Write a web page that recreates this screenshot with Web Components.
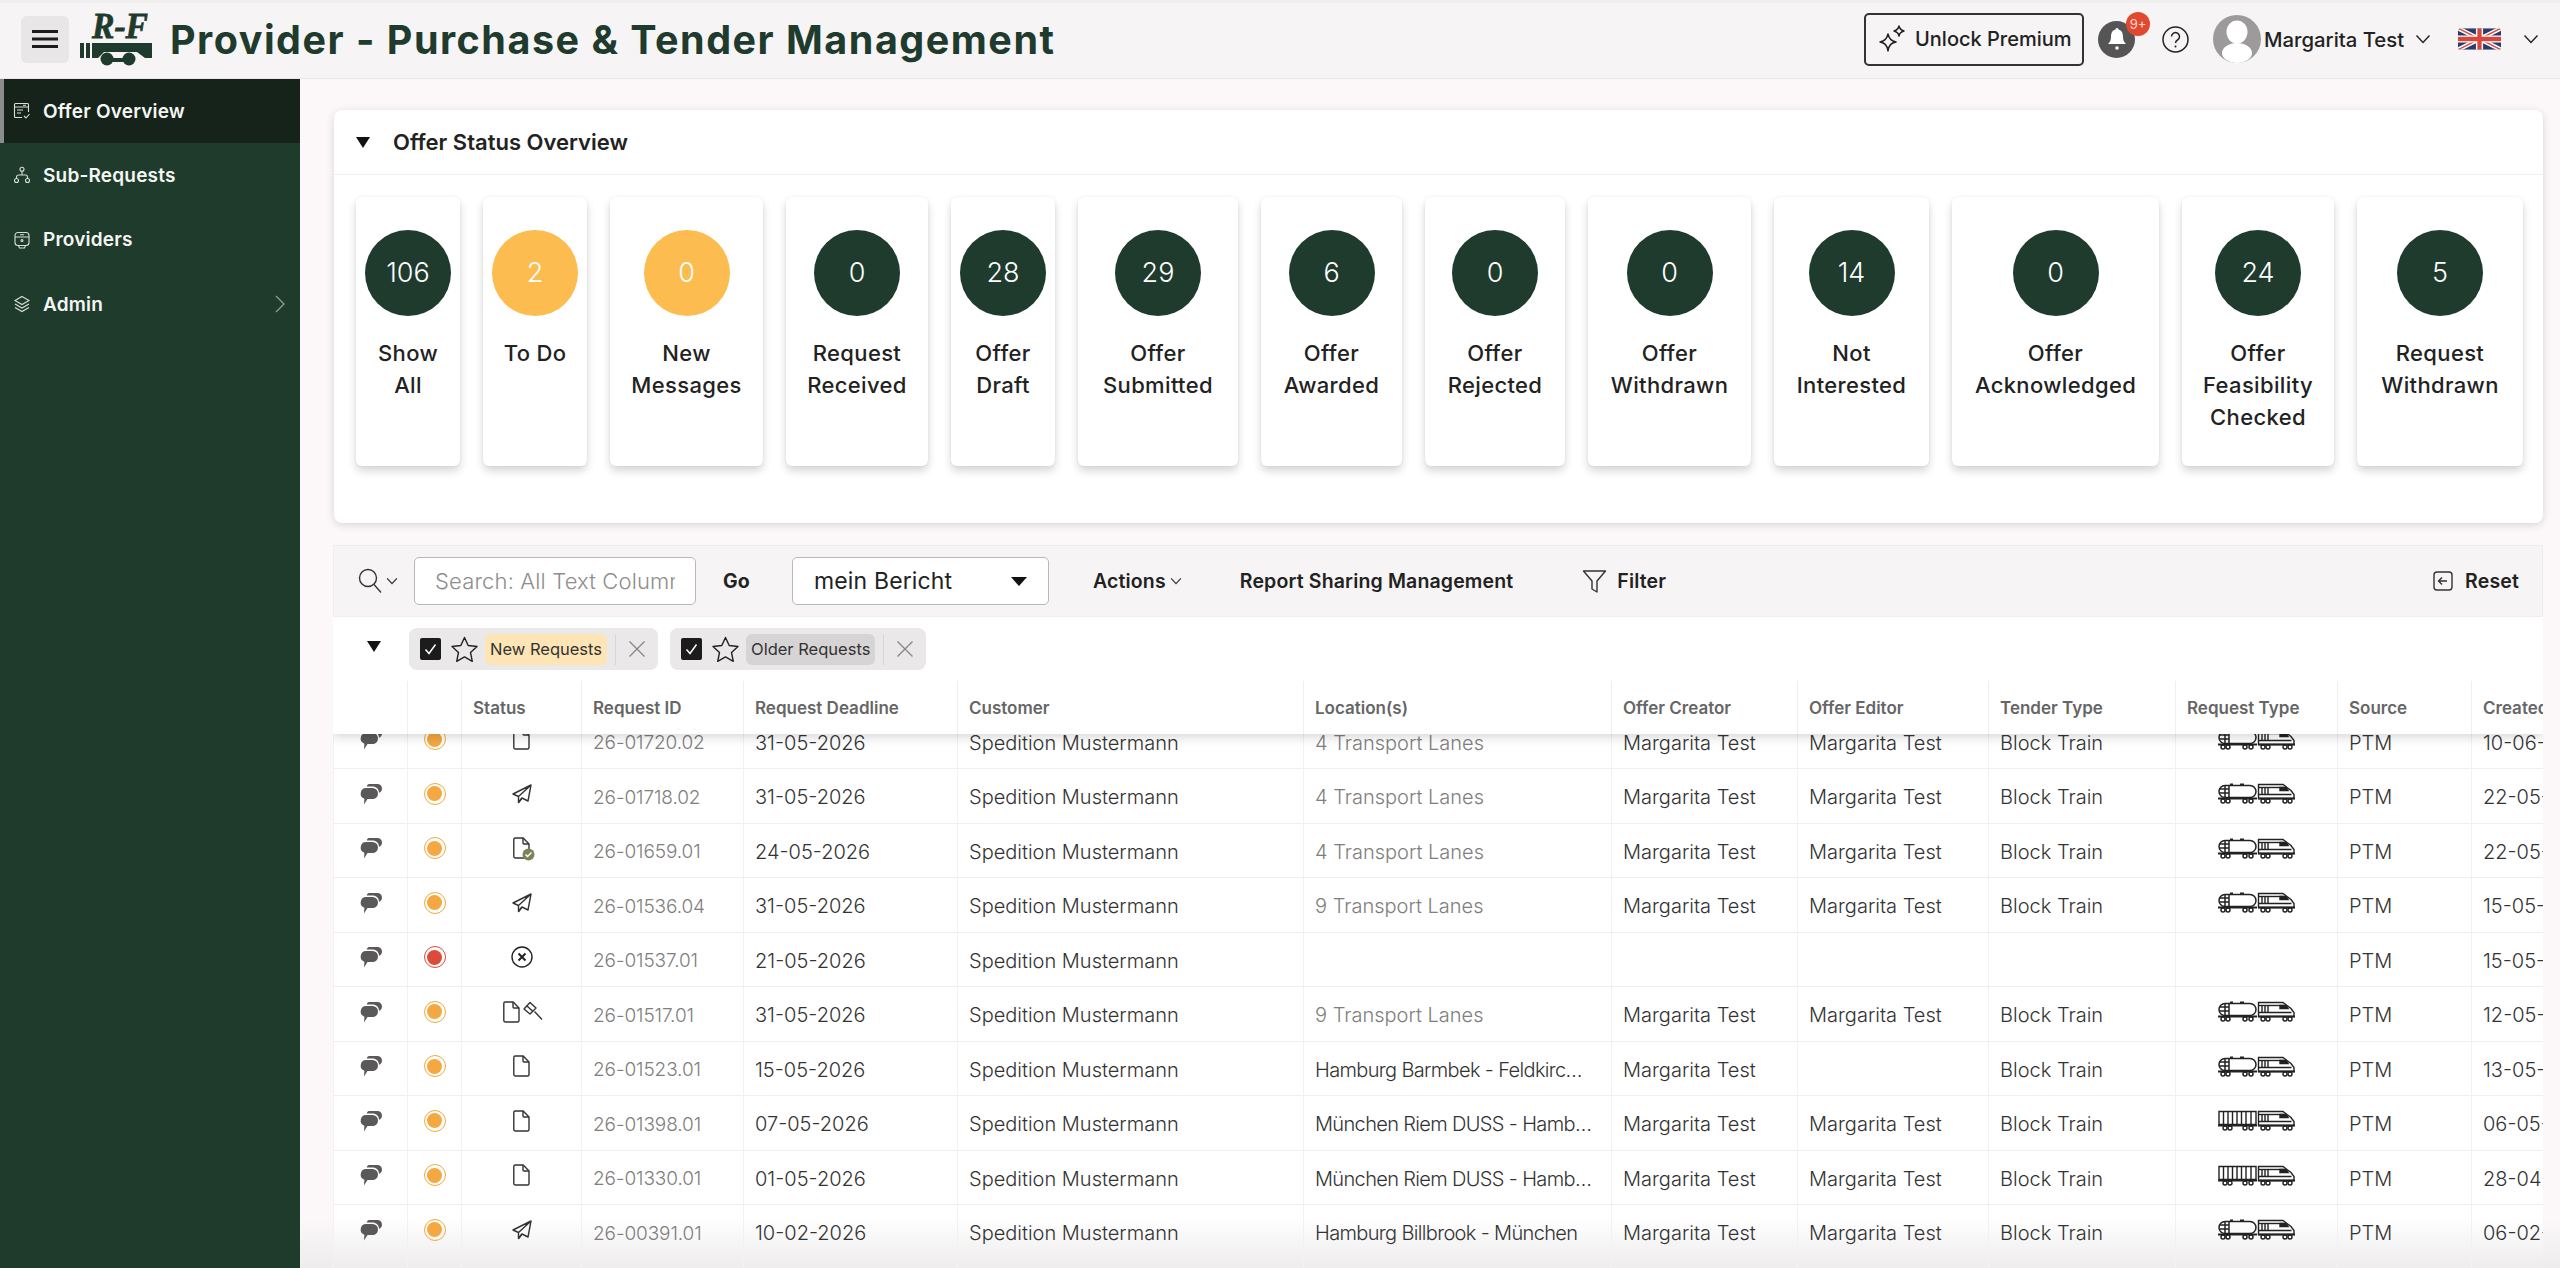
<!DOCTYPE html>
<html lang="en">
<head>
<meta charset="utf-8">
<title>Provider - Purchase &amp; Tender Management</title>
<style>
  html, body { margin: 0; padding: 0; height: 100%; overflow: hidden; background: #fcf8f9; }
  body { font-family: Inter, "Liberation Sans", sans-serif; }
</style>
</head>
<body>
<rf-app>
  <rf-header slot="header"></rf-header>
  <rf-sidebar slot="sidebar">
    <rf-nav-item icon="overview" active>Offer Overview</rf-nav-item>
    <rf-nav-item icon="tree">Sub-Requests</rf-nav-item>
    <rf-nav-item icon="train">Providers</rf-nav-item>
    <rf-nav-item icon="layers" arrow>Admin</rf-nav-item>
  </rf-sidebar>
  <rf-status-card>
    <rf-tile value="106" size="104">Show<br>All</rf-tile>
    <rf-tile value="2" size="104" warn>To Do</rf-tile>
    <rf-tile value="0" size="153" warn>New<br>Messages</rf-tile>
    <rf-tile value="0" size="142">Request<br>Received</rf-tile>
    <rf-tile value="28" size="104">Offer<br>Draft</rf-tile>
    <rf-tile value="29" size="160">Offer<br>Submitted</rf-tile>
    <rf-tile value="6" size="141">Offer<br>Awarded</rf-tile>
    <rf-tile value="0" size="140">Offer<br>Rejected</rf-tile>
    <rf-tile value="0" size="163">Offer<br>Withdrawn</rf-tile>
    <rf-tile value="14" size="155">Not<br>Interested</rf-tile>
    <rf-tile value="0" size="207">Offer<br>Acknowledged</rf-tile>
    <rf-tile value="24" size="152">Offer<br>Feasibility<br>Checked</rf-tile>
    <rf-tile value="5" size="166">Request<br>Withdrawn</rf-tile>
  </rf-status-card>
  <rf-toolbar></rf-toolbar>
  <rf-chip-row>
    <rf-chip tone="new">New Requests</rf-chip>
    <rf-chip tone="old">Older Requests</rf-chip>
  </rf-chip-row>
  <rf-table></rf-table>
</rf-app>

<script>
const ICONS = {
  overview: `<svg viewBox="0 0 18 18" width="18" height="18" fill="none" stroke="currentColor" stroke-width="1.1"><path d="M9 15.5H2.5a1 1 0 0 1-1-1v-12a1 1 0 0 1 1-1h12a1 1 0 0 1 1 1V10"/><path d="M1.5 5h14M4 8h6M4 11h4M10 3.2h3"/><path d="M11 14l2 2 3.5-4"/></svg>`,
  tree: `<svg viewBox="0 0 18 18" width="18" height="18" fill="none" stroke="currentColor" stroke-width="1.1"><circle cx="9" cy="3.2" r="2"/><circle cx="3.5" cy="14.5" r="2"/><circle cx="14.5" cy="14.5" r="2"/><path d="M9 5.2V9M3.5 12.5V11a2 2 0 0 1 2-2h7a2 2 0 0 1 2 2v1.5"/></svg>`,
  train: `<svg viewBox="0 0 18 18" width="18" height="18" fill="none" stroke="currentColor" stroke-width="1.1"><path d="M5 1.5h8a3 3 0 0 1 3 3v7a3 3 0 0 1-3 3H5a3 3 0 0 1-3-3v-7a3 3 0 0 1 3-3z"/><path d="M2 6h14M7 3.8h4"/><circle cx="9" cy="9.5" r="1"/><path d="M5.5 14.5L6.5 17h5l1-2.5"/></svg>`,
  layers: `<svg viewBox="0 0 18 18" width="18" height="18" fill="none" stroke="currentColor" stroke-width="1.1"><path d="M9 1.5l7 4-7 4-7-4z"/><path d="M2 9l7 4 7-4M2 12.5l7 4 7-4"/></svg>`,
  chevron: `<svg viewBox="0 0 16 10" width="16" height="10" fill="none" stroke="currentColor" stroke-width="1.4"><path d="M1.5 1.5L8 8.5l6.5-7"/></svg>`,
  chat: `<svg viewBox="0 0 22 22" width="22" height="22" fill="#5a5858"><path d="M9 1h8.5A4.5 4.5 0 0 1 22 5.5c0 2-1.2 3.7-3 4.3.1-3.9-3-6.3-6.5-6.3H6.7C7 2 8 1 9 1z"/><path d="M6 5h6.5a5.5 5.5 0 0 1 0 11H7.5L4 21.5l.4-5.8A5.5 5.5 0 0 1 6 5z"/></svg>`,
  doc: `<svg viewBox="0 0 17 22" width="17" height="22" fill="none" stroke="#333" stroke-width="1.4" stroke-linejoin="round"><path d="M2.2 1h8L16 7v12.5A1.5 1.5 0 0 1 14.500 21H2.200A1.500 1.500 0 0 1 .8 19.500v-17A1.500 1.500 0 0 1 2.200 1z"/><path d="M10 1v5a1 1 0 0 0 1 1h5"/></svg>`,
  plane: `<svg viewBox="0 0 20 20" width="20" height="20" fill="none" stroke="#333" stroke-width="1.4" stroke-linejoin="round"><path d="M19 1L1 10l5.5 2.5L19 1l-3 16-6-3-3.5 4.5v-6"/><path d="M6.5 18.5L10 14"/></svg>`,
  cross: `<svg viewBox="0 0 22 22" width="22" height="22" fill="none" stroke="#222" stroke-width="1.4"><circle cx="11" cy="11" r="10"/><path d="M7.5 7.5l7 7M14.5 7.5l-7 7" stroke-width="2"/></svg>`,
  gavel: `<svg viewBox="0 0 20 20" width="20" height="20" fill="none" stroke="#333" stroke-width="1.4" stroke-linejoin="round"><path d="M1 8l6-6.5L13 7l-6 6z"/><path d="M4 5l6 5.5"/><path d="M11.5 10.5l7.5 8"/></svg>`,
  tank: `<g fill="none" stroke="#222" stroke-width="1.5"><path d="M7 2.5h25a6 6 0 0 1 0 12H7a6 6 0 0 1 0-12z"/><path d="M7 2.5v12M11 2.5v12M1.5 6h9M1.5 10h9"/><path d="M12 1.2h3M22 1.2h4"/><path d="M0 15.5h39" stroke-width="1.8"/><circle cx="5" cy="18" r="2"/><circle cx="10" cy="18" r="2"/><circle cx="27" cy="18" r="2"/><circle cx="33" cy="18" r="2"/></g>`,
  wagons: `<g fill="none" stroke="#222" stroke-width="1.4"><path d="M1 1.5h37v13H1z"/><path d="M5.5 1.5v13M10 1.5v13M14.5 1.5v13M19 1.5v13M23.5 1.5v13M28 1.5v13M33 1.5v13"/><path d="M0 15.5h39" stroke-width="1.8"/><circle cx="7" cy="18" r="2"/><circle cx="12" cy="18" r="2"/><circle cx="27" cy="18" r="2"/><circle cx="33" cy="18" r="2"/></g>`,
  loco: `<g fill="none" stroke="#222" stroke-width="1.4" transform="translate(39 0)"><path d="M1.5 1.5H26l8 6 3 4v4H1.5z"/><path d="M1.5 4.5h26"/><path d="M5 5v6M8 5v6M11 5v6"/><path d="M23 4.5h6l2 3h-8z" fill="#222"/><path d="M1.5 11.5h33"/><path d="M1 15.5h37" stroke-width="1.8"/><circle cx="6" cy="18" r="2"/><circle cx="11" cy="18" r="2"/><circle cx="28" cy="18" r="2"/><circle cx="33" cy="18" r="2"/></g>`,
};

function trainIcon(kind) {
  return `<svg viewBox="0 0 78 21" width="78" height="21">${ICONS[kind]}${ICONS.loco}</svg>`;
}

const appTemplate = document.createElement("template");
appTemplate.innerHTML = `
  <style>
    :host {
      display: grid;
      grid-template-columns: 300px 1fr;
      grid-template-rows: 79px 1fr;
      height: 1268px;
      overflow: hidden;
      background: #fcf8f9;
    }
    .top { grid-column: 1 / 3; }
    main {
      display: flex;
      flex-direction: column;
      min-width: 0;
      min-height: 0;
      padding: 31px 17px 0 33px;
      background: linear-gradient(to bottom, #fcf8f9 calc(100% - 50px), #eeecec);
    }
  </style>
  <div class="top"><slot name="header"></slot></div>
  <slot name="sidebar"></slot>
  <main><slot></slot></main>
`;

class App extends HTMLElement {
  constructor() {
    super();
    this.attachShadow({ mode: "open" }).appendChild(appTemplate.content.cloneNode(true));
  }
}

const headerTemplate = document.createElement("template");
headerTemplate.innerHTML = `
  <style>
    :host {
      display: flex;
      align-items: center;
      height: 79px;
      box-sizing: border-box;
      padding: 0 21px 0 21px;
      background: linear-gradient(#f0eff0 0, #f0eff0 3px, #f6f4f5 3px);
      border-bottom: 1px solid #e9e6e5;
      color: #222;
    }
    .burger {
      width: 48px;
      height: 47px;
      border-radius: 6px;
      background: #e8e6e7;
      display: flex;
      align-items: center;
      justify-content: center;
      flex: none;
    }
    .logo { margin-left: 10px; flex: none; overflow: visible; }
    h1 {
      margin: 2px 0 0 18px;
      font-size: 39.5px;
      font-weight: 700;
      color: #1e3b2d;
      letter-spacing: 1.5px;
      white-space: nowrap;
    }
    .right { margin-left: auto; display: flex; align-items: center; }
    .premium {
      display: flex;
      align-items: center;
      gap: 9px;
      box-sizing: border-box;
      width: 220px;
      height: 53px;
      padding-left: 12px;
      border: 2px solid #333;
      border-radius: 5px;
      font-size: 20px;
      font-weight: 500;
      color: #222;
    }
    .bell {
      position: relative;
      width: 37px;
      height: 37px;
      margin-left: 14px;
      border-radius: 50%;
      background: #555;
      display: flex;
      align-items: center;
      justify-content: center;
    }
    .badge {
      position: absolute;
      top: -9px;
      right: -15px;
      width: 24px;
      height: 24px;
      border-radius: 50%;
      background: #e0492f;
      color: #ffd9cf;
      font-size: 13px;
      line-height: 24px;
      text-align: center;
    }
    .help { margin-left: 27px; display: flex; }
    .avatar { margin-left: 24px; display: flex; }
    .name { margin-left: 3px; font-size: 20.3px; font-weight: 500; white-space: nowrap; width: 139px; }
    .chev { display: flex; color: #222; margin-left: 12px; }
    .flag { margin-left: 27px; display: flex; }
    .chev.last { margin-left: 22px; }
  </style>
  <div class="burger">
    <svg width="26" height="18" viewBox="0 0 26 18" fill="#1c1c1c"><rect y="0" width="26" height="3"/><rect y="7.5" width="26" height="3"/><rect y="15" width="26" height="3"/></svg>
  </div>
  <svg class="logo" width="73" height="54" viewBox="0 0 73 54">
    <text x="13" y="26" font-family="Liberation Serif, serif" font-size="36" font-weight="700" font-style="italic" fill="#1e3b2d" stroke="#1e3b2d" stroke-width="0.8" textLength="56" lengthAdjust="spacingAndGlyphs">R-F</text>
    <path d="M1 31h4v15H1zM7 31h4v15H7z" fill="#1e3b2d"/>
    <path d="M13 31h60v15h-7l-8-6H25l-6 6h-6z" fill="#1e3b2d"/>
    <path d="M28 46h20v4H28z" fill="#1e3b2d"/>
    <circle cx="28" cy="47" r="6.5" fill="#1e3b2d"/><circle cx="50" cy="47" r="6.5" fill="#1e3b2d"/>
  </svg>
  <h1>Provider - Purchase &amp; Tender Management</h1>
  <div class="right">
    <div class="premium">
      <svg width="28" height="28" viewBox="0 0 28 28" fill="none" stroke="#222" stroke-width="1.5" stroke-linejoin="round"><path d="M10 9c1 5 3 7 8 8-5 1-7 3-8 9-1-6-3-8-8-9 5-1 7-3 8-8z"/><path d="M21 1c.6 3 1.8 4.2 5 5-3.2.8-4.4 2-5 5-.6-3-1.8-4.2-5-5 3.2-.8 4.4-2 5-5z"/></svg>
      <span>Unlock Premium</span>
    </div>
    <div class="bell">
      <svg width="18" height="24" viewBox="0 0 18 24" fill="#fff"><path d="M9 1c1 0 1.5.8 1.5 1.6C14 3.5 15 6.5 15 10c0 3 1 5 3 7H0c2-2 3-4 3-7 0-3.5 1-6.5 4.500-7.400C7.500 1.800 8 1 9 1z"/><circle cx="9" cy="21" r="1.8"/></svg>
      <span class="badge">9+</span>
    </div>
    <div class="help">
      <svg width="27" height="27" viewBox="0 0 27 27" fill="none" stroke="#222" stroke-width="1.5"><circle cx="13.5" cy="13.5" r="12.5"/><path d="M9.5 10.5a4 4 0 1 1 6 3.5c-1.3.8-2 1.5-2 3"/><circle cx="13.5" cy="20.5" r="1" fill="#222" stroke="none"/></svg>
    </div>
    <div class="avatar">
      <svg width="48" height="48" viewBox="0 0 48 48"><circle cx="24" cy="24" r="24" fill="#9c9a9b"/><ellipse cx="24" cy="17" rx="10.5" ry="11.5" fill="#fff"/><ellipse cx="24" cy="38" rx="15" ry="10" fill="#fff"/></svg>
    </div>
    <span class="name">Margarita Test</span>
    <span class="chev">${ICONS.chevron}</span>
    <div class="flag">
      <svg width="43" height="22" viewBox="0 0 60 30"><defs><clipPath id="f"><rect width="60" height="30" rx="4"/></clipPath></defs><g clip-path="url(#f)"><rect width="60" height="30" fill="#2b3a6b"/><path d="M0 0l60 30M60 0L0 30" stroke="#fff" stroke-width="6"/><path d="M0 0l60 30M60 0L0 30" stroke="#d9473c" stroke-width="2"/><path d="M30 0v30M0 15h60" stroke="#fff" stroke-width="10"/><path d="M30 0v30M0 15h60" stroke="#d9473c" stroke-width="6"/></g></svg>
    </div>
    <span class="chev last">${ICONS.chevron}</span>
  </div>
`;

class Header extends HTMLElement {
  constructor() {
    super();
    this.attachShadow({ mode: "open" }).appendChild(headerTemplate.content.cloneNode(true));
  }
}

const sidebarTemplate = document.createElement("template");
sidebarTemplate.innerHTML = `
  <style>
    :host { display: block; background: #1f3b2c; min-height: 0; }
  </style>
  <slot></slot>
`;

class Sidebar extends HTMLElement {
  constructor() {
    super();
    this.attachShadow({ mode: "open" }).appendChild(sidebarTemplate.content.cloneNode(true));
  }
}

const navItemTemplate = document.createElement("template");
navItemTemplate.innerHTML = `
  <style>
    :host {
      display: flex;
      align-items: center;
      height: 64.3px;
      padding-left: 13px;
      padding-right: 15px;
      color: #f4f6f4;
      font-size: 19px;
      font-weight: 600;
      letter-spacing: 0.2px;
      box-sizing: border-box;
    }
    :host([active]) {
      background: #16231b;
      box-shadow: inset 4px 0 0 #8a8d8b;
    }
    .icon { display: flex; width: 18px; margin-right: 12px; color: #d9dedb; }
    .arrow { margin-left: auto; display: flex; color: #8d9a92; }
  </style>
  <span class="icon"></span>
  <slot></slot>
  <span class="arrow"></span>
`;

class NavItem extends HTMLElement {
  constructor() {
    super();
    this.attachShadow({ mode: "open" }).appendChild(navItemTemplate.content.cloneNode(true));
  }

  connectedCallback() {
    this.shadowRoot.querySelector(".icon").innerHTML = ICONS[this.getAttribute("icon")];
    if (this.hasAttribute("arrow")) {
      this.shadowRoot.querySelector(".arrow").innerHTML =
        `<svg width="10" height="18" viewBox="0 0 10 18" fill="none" stroke="currentColor" stroke-width="1.4"><path d="M1 1l8 8-8 8"/></svg>`;
    }
  }
}

const statusCardTemplate = document.createElement("template");
statusCardTemplate.innerHTML = `
  <style>
    :host {
      display: block;
      height: 413px;
      flex: none;
      margin-left: 1px;
      box-sizing: border-box;
      background: #fff;
      border-radius: 8px;
      box-shadow: 0 2px 8px rgba(0, 0, 0, 0.14);
    }
    .head {
      display: flex;
      align-items: center;
      height: 65px;
      box-sizing: border-box;
      padding-left: 22px;
      border-bottom: 1px solid #f1eeee;
      font-size: 22px;
      font-weight: 600;
      color: #222;
    }
    .caret {
      width: 0;
      height: 0;
      border-left: 7px solid transparent;
      border-right: 7px solid transparent;
      border-top: 11px solid #111;
      margin-right: 23px;
    }
    .tiles { display: flex; gap: 23px; padding: 22px 0 0 22px; }
  </style>
  <div class="head"><span class="caret"></span>Offer Status Overview</div>
  <div class="tiles"><slot></slot></div>
`;

class StatusCard extends HTMLElement {
  constructor() {
    super();
    this.attachShadow({ mode: "open" }).appendChild(statusCardTemplate.content.cloneNode(true));
  }
}

const tileTemplate = document.createElement("template");
tileTemplate.innerHTML = `
  <style>
    :host {
      display: flex;
      flex-direction: column;
      align-items: center;
      flex: none;
      height: 269px;
      box-sizing: border-box;
      padding-top: 33px;
      background: #fff;
      border-radius: 6px;
      box-shadow: 0 5px 8px rgba(0, 0, 0, 0.16), 0 0 3px rgba(0, 0, 0, 0.06);
      font-size: 22px;
      font-weight: 500;
      letter-spacing: 0.35px;
      line-height: 32px;
      text-align: center;
      color: #222;
    }
    .num {
      width: 86px;
      height: 86px;
      border-radius: 50%;
      background: #1e3b2d;
      color: #fff;
      font-size: 27px;
      font-weight: 300;
      letter-spacing: 0;
      line-height: 86px;
      margin-bottom: 21px;
    }
    :host([warn]) .num { background: #fdbc4f; }
  </style>
  <div class="num"></div>
  <div><slot></slot></div>
`;

class Tile extends HTMLElement {
  constructor() {
    super();
    this.attachShadow({ mode: "open" }).appendChild(tileTemplate.content.cloneNode(true));
  }

  connectedCallback() {
    this.style.width = this.getAttribute("size") + "px";
    this.shadowRoot.querySelector(".num").textContent = this.getAttribute("value");
  }
}

const toolbarTemplate = document.createElement("template");
toolbarTemplate.innerHTML = `
  <style>
    :host {
      display: flex;
      align-items: center;
      flex: none;
      height: 72px;
      margin-top: 22px;
      box-sizing: border-box;
      padding: 0 23px;
      background: #f6f4f5;
      border: 1px solid #efeded;
      font-size: 19.5px;
      letter-spacing: 0.15px;
      font-weight: 600;
      color: #222;
    }
    .search { display: flex; align-items: center; gap: 3px; color: #333; }
    .input {
      box-sizing: border-box;
      width: 282px;
      height: 48px;
      margin-left: 16px;
      padding: 0 20px;
      line-height: 46px;
      background: #fff;
      border: 1px solid #b9b7b7;
      border-radius: 5px;
      font-size: 22px;
      font-weight: 300;
      color: #8f8d8d;
    }
    .input span { display: block; overflow: hidden; white-space: nowrap; }
    .go { margin-left: 27px; font-weight: 700; width: 69px; }
    .select {
      display: flex;
      align-items: center;
      box-sizing: border-box;
      width: 257px;
      height: 48px;
      padding: 0 21px;
      background: #fff;
      border: 1px solid #b9b7b7;
      border-radius: 5px;
      font-size: 23px;
      font-weight: 400;
    }
    .select i {
      margin-left: auto;
      border-left: 8px solid transparent;
      border-right: 8px solid transparent;
      border-top: 9px solid #111;
    }
    .actions { margin-left: 44px; display: flex; align-items: center; gap: 4px; }
    .report { margin-left: 58px; }
    .filter { margin-left: 69px; display: flex; align-items: center; gap: 10px; }
    .reset { margin-left: auto; display: flex; align-items: center; gap: 12px; }
  </style>
  <div class="search">
    <svg width="26" height="26" viewBox="0 0 26 26" fill="none" stroke="#333" stroke-width="1.4"><circle cx="11" cy="10" r="8.5"/><path d="M17 16.5l7 8"/></svg>
    <svg width="12" height="8" viewBox="0 0 16 10" fill="none" stroke="#333" stroke-width="1.8"><path d="M1.5 1.5L8 8.5l6.5-7"/></svg>
  </div>
  <div class="input"><span>Search: All Text Columns</span></div>
  <span class="go">Go</span>
  <div class="select">mein Bericht<i></i></div>
  <div class="actions">Actions <svg width="12" height="8" viewBox="0 0 16 10" fill="none" stroke="#333" stroke-width="1.5"><path d="M1.5 1.5L8 8.5l6.5-7"/></svg></div>
  <span class="report">Report Sharing Management</span>
  <div class="filter">
    <svg width="25" height="25" viewBox="0 0 25 25" fill="none" stroke="#333" stroke-width="1.4" stroke-linejoin="round"><path d="M1.5 2h22L15 12v11l-5-3v-8z"/></svg>
    Filter
  </div>
  <div class="reset">
    <svg width="20" height="20" viewBox="0 0 20 20" fill="none" stroke="#333" stroke-width="1.4"><rect x="1" y="1" width="18" height="18" rx="3"/><path d="M14 10H6M9 6.5L5.5 10 9 13.5"/></svg>
    Reset
  </div>
`;

class Toolbar extends HTMLElement {
  constructor() {
    super();
    this.attachShadow({ mode: "open" }).appendChild(toolbarTemplate.content.cloneNode(true));
  }
}

const chipRowTemplate = document.createElement("template");
chipRowTemplate.innerHTML = `
  <style>
    :host {
      display: flex;
      align-items: center;
      flex: none;
      height: 64px;
      padding-left: 34px;
      background: #fff;
    }
    .caret {
      width: 0;
      height: 0;
      border-left: 7px solid transparent;
      border-right: 7px solid transparent;
      border-top: 11px solid #111;
      margin: -6px 28px 0 0;
    }
    .chips { display: flex; gap: 12px; }
  </style>
  <span class="caret"></span>
  <div class="chips"><slot></slot></div>
`;

class ChipRow extends HTMLElement {
  constructor() {
    super();
    this.attachShadow({ mode: "open" }).appendChild(chipRowTemplate.content.cloneNode(true));
  }
}

const chipTemplate = document.createElement("template");
chipTemplate.innerHTML = `
  <style>
    :host {
      display: flex;
      align-items: center;
      height: 42px;
      padding: 0 12px 0 11px;
      background: #ebe8e9;
      border-radius: 8px;
      font-size: 16.5px;
      color: #333;
    }
    .check {
      width: 21px;
      height: 22px;
      border-radius: 2px;
      background: #1c1c1c;
      display: flex;
      align-items: center;
      justify-content: center;
    }
    .star { margin: 0 7px 0 10px; display: flex; }
    .label {
      height: 31px;
      line-height: 31px;
      padding: 0 5px;
      border-radius: 6px;
      white-space: nowrap;
    }
    :host([tone="new"]) .label { background: #fde5b5; }
    :host([tone="old"]) .label { background: #d6d4d4; }
    .x {
      display: flex;
      align-items: center;
      height: 31px;
      margin-left: 8px;
      padding-left: 12px;
      border-left: 1px solid #d9d6d7;
    }
  </style>
  <span class="check"><svg width="13" height="12" viewBox="0 0 13 12" fill="none" stroke="#fff" stroke-width="1.5"><path d="M1.5 6.5l3.5 4 6.5-9"/></svg></span>
  <span class="star"><svg width="27" height="27" viewBox="0 0 27 27" fill="none" stroke="#222" stroke-width="1.4" stroke-linejoin="round"><path d="M13.5 1.5l3.7 8 8.8 1-6.500 6 1.800 8.800-7.800-4.400-7.800 4.400 1.800-8.800-6.500-6 8.800-1z"/></svg></span>
  <span class="label"><slot></slot></span>
  <span class="x"><svg width="18" height="18" viewBox="0 0 18 18" fill="none" stroke="#888" stroke-width="1.4"><path d="M1.5 1.5l15 15M16.5 1.5l-15 15"/></svg></span>
`;

class Chip extends HTMLElement {
  constructor() {
    super();
    this.attachShadow({ mode: "open" }).appendChild(chipTemplate.content.cloneNode(true));
  }
}

const COLUMNS = "74px 54px 120px 162px 214px 346px 308px 186px 191px 187px 162px 134px 72px";
const T4 = "4 Transport Lanes";
const T9 = "9 Transport Lanes";
const MT = "Margarita Test";
const BT = "Block Train";
const ROWS = [
  ["doc", "o", "26-01720.02", "31-05-2026", T4, MT, MT, BT, "tank", "10-06-2026", true],
  ["plane", "o", "26-01718.02", "31-05-2026", T4, MT, MT, BT, "tank", "22-05-2026", true],
  ["docok", "o", "26-01659.01", "24-05-2026", T4, MT, MT, BT, "tank", "22-05-2026", true],
  ["plane", "o", "26-01536.04", "31-05-2026", T9, MT, MT, BT, "tank", "15-05-2026", true],
  ["cross", "r", "26-01537.01", "21-05-2026", "", "", "", "", "", "15-05-2026", false],
  ["docgavel", "o", "26-01517.01", "31-05-2026", T9, MT, MT, BT, "tank", "12-05-2026", true],
  ["doc", "o", "26-01523.01", "15-05-2026", "Hamburg Barmbek - Feldkirchen", MT, "", BT, "tank", "13-05-2026", false],
  ["doc", "o", "26-01398.01", "07-05-2026", "München Riem DUSS - Hamburg", MT, MT, BT, "wagons", "06-05-2026", false],
  ["doc", "o", "26-01330.01", "01-05-2026", "München Riem DUSS - Hamburg", MT, MT, BT, "wagons", "28-04-2026", false],
  ["plane", "o", "26-00391.01", "10-02-2026", "Hamburg Billbrook - München", MT, MT, BT, "tank", "06-02-2026", false],
];

function statusIcon(name) {
  if (name === "docok") {
    return `<span class="pair">${ICONS.doc}<svg class="ok" width="13" height="13" viewBox="0 0 13 13"><circle cx="6.5" cy="6.5" r="6" fill="#7d8257"/><path d="M3.5 6.5l2 2 4-4" fill="none" stroke="#fff" stroke-width="1.5"/></svg></span>`;
  }
  if (name === "docgavel") {
    return `<span class="pair wide">${ICONS.doc}${ICONS.gavel}</span>`;
  }
  return ICONS[name];
}

const rowTemplate = document.createElement("template");
rowTemplate.innerHTML = `
  <style>
    :host {
      display: grid;
      grid-template-columns: ${COLUMNS};
      height: 54.5px;
      box-sizing: border-box;
      border-bottom: 1px solid #f1eeef;
      font-size: 20px;
      font-weight: 300;
      color: #333;
    }
    div {
      display: flex;
      align-items: center;
      min-width: 0;
      padding: 3px 0 0 11px;
      border-left: 1px solid #f3f1f1;
      white-space: nowrap;
      overflow: hidden;
    }
    div:first-child { border-left: 0; }
    .txt { overflow: hidden; text-overflow: ellipsis; max-width: 278px; }
    .long { letter-spacing: -0.65px; }
    .grey { color: #807e7e; }
    .id { font-size: 19px; letter-spacing: -0.1px; }
    .icon { justify-content: center; padding: 0 0 4px 0; }
    .dot {
      width: 22px;
      height: 22px;
      box-sizing: border-box;
      border: 1.5px solid #f4a93a;
      border-radius: 50%;
      display: flex;
      align-items: center;
      justify-content: center;
    }
    .dot::after { content: ""; width: 15px; height: 15px; border-radius: 50%; background: #f5a742; }
    .dot.r { border-color: #dd4a3a; }
    .dot.r::after { background: #dd4a3a; }
    .pair { position: relative; display: flex; }
    .pair .ok { position: absolute; right: -5px; bottom: -2px; }
    .pair.wide { gap: 3px; margin-left: 2px; }
  </style>
`;

class Row extends HTMLElement {
  set data(d) {
    const root = this.attachShadow({ mode: "open" });
    root.appendChild(rowTemplate.content.cloneNode(true));
    const [status, dot, id, deadline, location, creator, editor, tender, train, created, greyLoc] = d;
    const cells = [
      status ? `<div class="icon">${ICONS.chat}</div>` : `<div></div>`,
      status ? `<div class="icon"><span class="dot ${dot}"></span></div>` : `<div></div>`,
      status ? `<div class="icon">${statusIcon(status)}</div>` : `<div></div>`,
      `<div class="grey id">${id}</div>`,
      `<div>${deadline}</div>`,
      `<div>${status ? "Spedition Mustermann" : ""}</div>`,
      `<div><span class="txt ${greyLoc ? "grey" : "long"}">${location}</span></div>`,
      `<div>${creator}</div>`,
      `<div>${editor}</div>`,
      `<div>${tender}</div>`,
      train ? `<div class="icon">${trainIcon(train)}</div>` : `<div></div>`,
      `<div>${status ? "PTM" : ""}</div>`,
      `<div>${created}</div>`,
    ];
    root.innerHTML += cells.join("");
  }
}

const tableTemplate = document.createElement("template");
tableTemplate.innerHTML = `
  <style>
    :host {
      display: flex;
      flex-direction: column;
      flex: 1;
      min-height: 0;
      overflow: hidden;
      background: #fff;
      color: #333;
    }
    .head {
      display: grid;
      grid-template-columns: ${COLUMNS};
      flex: none;
      height: 53px;
      position: relative;
      z-index: 1;
      background: #fff;
      box-shadow: 0 3px 10px rgba(0, 0, 0, 0.16);
      font-size: 17px;
      font-weight: 600;
      color: #666;
    }
    .head span {
      display: flex;
      align-items: center;
      padding-left: 11px;
      border-left: 1px solid #f0eeee;
      white-space: nowrap;
      overflow: hidden;
    }
    .head span:first-child { border-left: 0; }
    .body {
      flex: 1;
      min-height: 0;
      overflow: hidden;
      background: linear-gradient(to bottom, #fff calc(100% - 50px), #eeecec);
    }
    .rows { margin-top: -19.5px; }
  </style>
  <div class="head">
    <span></span><span></span><span>Status</span><span>Request ID</span><span>Request Deadline</span>
    <span>Customer</span><span>Location(s)</span><span>Offer Creator</span><span>Offer Editor</span>
    <span>Tender Type</span><span>Request Type</span><span>Source</span><span>Created</span>
  </div>
  <div class="body"><div class="rows"></div></div>
`;

class Table extends HTMLElement {
  constructor() {
    super();
    this.attachShadow({ mode: "open" }).appendChild(tableTemplate.content.cloneNode(true));
  }

  connectedCallback() {
    const rows = this.shadowRoot.querySelector(".rows");
    ROWS.concat([["", "", "", "", "", "", "", "", "", "", false]]).forEach((data) => {
      const row = document.createElement("rf-row");
      row.data = data;
      rows.appendChild(row);
    });
  }
}

window.customElements.define("rf-row", Row);
window.customElements.define("rf-app", App);
window.customElements.define("rf-header", Header);
window.customElements.define("rf-sidebar", Sidebar);
window.customElements.define("rf-nav-item", NavItem);
window.customElements.define("rf-status-card", StatusCard);
window.customElements.define("rf-tile", Tile);
window.customElements.define("rf-toolbar", Toolbar);
window.customElements.define("rf-chip-row", ChipRow);
window.customElements.define("rf-chip", Chip);
window.customElements.define("rf-table", Table);
</script>
</body>
</html>
